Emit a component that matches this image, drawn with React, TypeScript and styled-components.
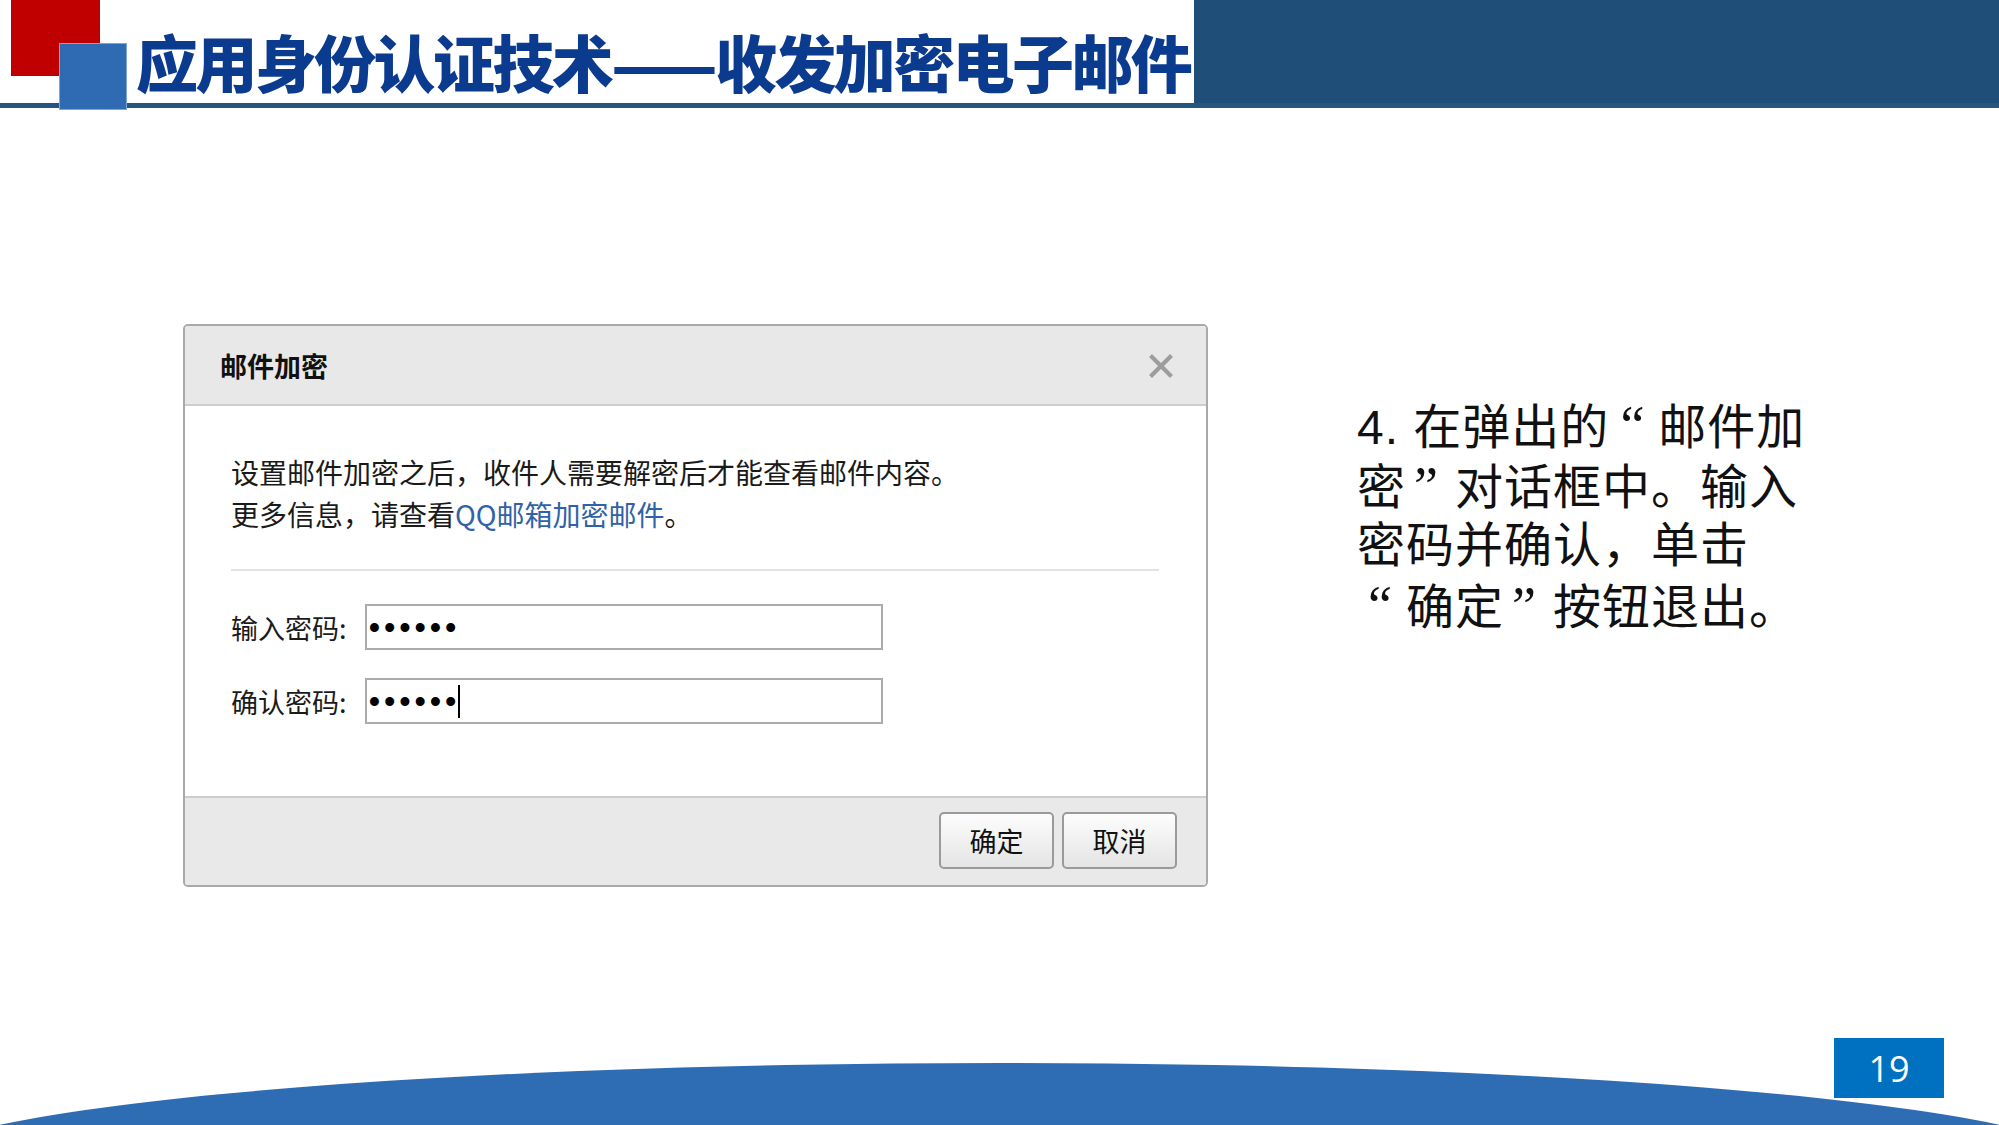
import React from "react";
import styled, { createGlobalStyle } from "styled-components";

const GlobalStyle = createGlobalStyle`
  html, body { margin: 0; padding: 0; background: #ffffff; }
  body { font-family: "Noto Sans CJK SC", "Noto Sans", sans-serif; }
`;

const Slide = styled.div`
  width: 1999px;
  height: 1125px;
  overflow: hidden;
  display: flex;
  flex-direction: column;
  background: #ffffff;
`;

const Header = styled.header`
  display: flex;
  height: 108px;
  box-sizing: border-box;
  border-bottom: 5px solid #25567f;
  flex-shrink: 0;
`;

const TitleArea = styled.div`
  position: relative;
  width: 1194px;
  flex-shrink: 0;
`;

const RedSquare = styled.div`
  position: absolute;
  left: 11px;
  top: 0;
  width: 89px;
  height: 76px;
  background: #c00000;
`;

const BlueSquare = styled.div`
  position: absolute;
  left: 59px;
  top: 43px;
  width: 68px;
  height: 67px;
  box-sizing: border-box;
  background: #2e6bb3;
  border: 1px solid #7fa4d6;
`;

const TitleText = styled.h1`
  position: relative;
  margin: 30px 0 0 136px;
  font-family: "Noto Sans CJK SC", sans-serif;
  font-size: 62px;
  line-height: 62px;
  font-weight: 900;
  letter-spacing: -2.6px;
  color: #0b3b8f;
  white-space: nowrap;
`;

const NavyBlock = styled.div`
  flex: 1;
  background: #1f4e79;
`;

const Main = styled.main`
  flex: 1;
  display: flex;
  align-items: flex-start;
  padding-left: 183px;
  gap: 149px;
`;

const Dialog = styled.section`
  margin-top: 216px;
  width: 1025px;
  box-sizing: border-box;
  border: 2px solid #a9a9a9;
  border-radius: 5px;
  overflow: hidden;
  background: #ffffff;
  font-family: "Noto Sans CJK SC", sans-serif;
  color: #1a1a1a;
`;

const DialogHeader = styled.div`
  height: 78px;
  display: flex;
  align-items: center;
  justify-content: space-between;
  padding: 0 33px 0 35px;
  background: #e8e8e8;
  border-bottom: 2px solid #cdcdcd;
`;

const DialogTitle = styled.div`
  font-size: 27px;
  font-weight: 700;
  color: #111111;
`;

const CloseButton = styled.button`
  width: 24px;
  height: 24px;
  padding: 0;
  border: 0;
  background: transparent;
  display: flex;
  margin-top: 2px;
`;

const DialogBody = styled.div`
  padding: 45px 47px 72px 46px;
`;

const Intro = styled.p`
  margin: 0;
  font-size: 28px;
  line-height: 42px;
  color: #1a1a1a;
`;

const Link = styled.a`
  color: #2f62a8;
  text-decoration: none;
`;

const Separator = styled.hr`
  margin: 34px 0 0;
  height: 2px;
  border: 0;
  background: #e3e3e3;
`;

const FormRow = styled.div<{ $gap: number }>`
  display: flex;
  align-items: center;
  margin-top: ${(p) => p.$gap}px;
`;

const FieldLabel = styled.label`
  width: 134px;
  font-size: 27px;
  color: #1a1a1a;
`;

const FieldBox = styled.div`
  position: relative;
  width: 518px;
  height: 46px;
  box-sizing: border-box;
  border: 2px solid #ababab;
  display: flex;
  align-items: center;
  padding-left: 2px;
  background: #ffffff;
`;

const Dots = styled.span`
  font-family: "Liberation Sans", Arial, sans-serif;
  font-size: 31px;
  font-weight: 700;
  letter-spacing: 4.4px;
  color: #000000;
  line-height: 1;
`;

const Caret = styled.span`
  display: inline-block;
  width: 2px;
  height: 33px;
  background: #000000;
  margin-left: -3px;
`;

const DialogFooter = styled.div`
  height: 89px;
  box-sizing: border-box;
  display: flex;
  justify-content: flex-end;
  align-items: flex-start;
  gap: 8px;
  padding: 14px 29px 0 0;
  background: #e9e9e9;
  border-top: 2px solid #cdcdcd;
`;

const FooterButton = styled.button`
  width: 115px;
  height: 57px;
  box-sizing: border-box;
  border: 2px solid #9a9a9a;
  border-radius: 5px;
  background: linear-gradient(#fdfdfd, #e4e4e4);
  font-family: "Noto Sans CJK SC", sans-serif;
  font-size: 27px;
  color: #111111;
  padding: 0;
`;

const SideNote = styled.div`
  margin-top: 288px;
  width: 470px;
  font-family: "Liberation Sans", "Noto Sans CJK SC", sans-serif;
  font-size: 48px;
  letter-spacing: 1px;
  color: #111111;
`;

const NoteLine = styled.div`
  height: 60px;
  line-height: 60px;
  white-space: nowrap;
`;

const Quote = styled.span<{ $open?: boolean }>`
  font-family: "Liberation Serif", serif;
  font-size: 54px;
  padding-left: ${(p) => (p.$open ? 11 : 8)}px;
  padding-right: ${(p) => (p.$open ? 13 : 16)}px;
`;

const Footer = styled.footer`
  position: relative;
  height: 87px;
  flex-shrink: 0;
  display: flex;
  justify-content: flex-end;
  padding-right: 55px;
`;

const Arc = styled.svg`
  position: absolute;
  left: 0;
  bottom: 0;
`;

const PageNumber = styled.div`
  position: relative;
  width: 110px;
  height: 60px;
  background: #0070c0;
  color: #ffffff;
  display: flex;
  align-items: center;
  justify-content: center;
  font-family: "Open Sans", "Noto Sans", sans-serif;
  font-size: 36px;
`;

const CloseIcon = () => (
  <svg width="24" height="24" viewBox="0 0 24 24">
    <path d="M3 3 L21 21 M21 3 L3 21" stroke="#9d9d9d" strokeWidth="4.2" strokeLinecap="square" />
  </svg>
);

const Open = () => <Quote $open>“</Quote>;
const Close = () => <Quote>”</Quote>;

export default function App() {
  return (
    <>
      <GlobalStyle />
      <Slide>
        <Header>
          <TitleArea>
            <RedSquare />
            <BlueSquare />
            <TitleText>应用身份认证技术——收发加密电子邮件</TitleText>
          </TitleArea>
          <NavyBlock />
        </Header>
        <Main>
          <Dialog>
            <DialogHeader>
              <DialogTitle>邮件加密</DialogTitle>
              <CloseButton aria-label="关闭">
                <CloseIcon />
              </CloseButton>
            </DialogHeader>
            <DialogBody>
              <Intro>
                设置邮件加密之后，收件人需要解密后才能查看邮件内容。
                <br />
                更多信息，请查看<Link>QQ邮箱加密邮件</Link>。
              </Intro>
              <Separator />
              <FormRow $gap={33}>
                <FieldLabel>输入密码:</FieldLabel>
                <FieldBox>
                  <Dots>••••••</Dots>
                </FieldBox>
              </FormRow>
              <FormRow $gap={28}>
                <FieldLabel>确认密码:</FieldLabel>
                <FieldBox>
                  <Dots>••••••</Dots>
                  <Caret />
                </FieldBox>
              </FormRow>
            </DialogBody>
            <DialogFooter>
              <FooterButton>确定</FooterButton>
              <FooterButton>取消</FooterButton>
            </DialogFooter>
          </Dialog>
          <SideNote>
            <NoteLine>
              4. 在弹出的<Open />邮件加
            </NoteLine>
            <NoteLine>
              密<Close />对话框中。输入
            </NoteLine>
            <NoteLine>密码并确认，单击</NoteLine>
            <NoteLine>
              <Open />确定<Close />按钮退出。
            </NoteLine>
          </SideNote>
        </Main>
        <Footer>
          <Arc width="1999" height="87" viewBox="0 1038 1999 87">
            <ellipse cx="1000" cy="1169" rx="1100" ry="106" fill="#2e6db4" />
          </Arc>
          <PageNumber>19</PageNumber>
        </Footer>
      </Slide>
    </>
  );
}
